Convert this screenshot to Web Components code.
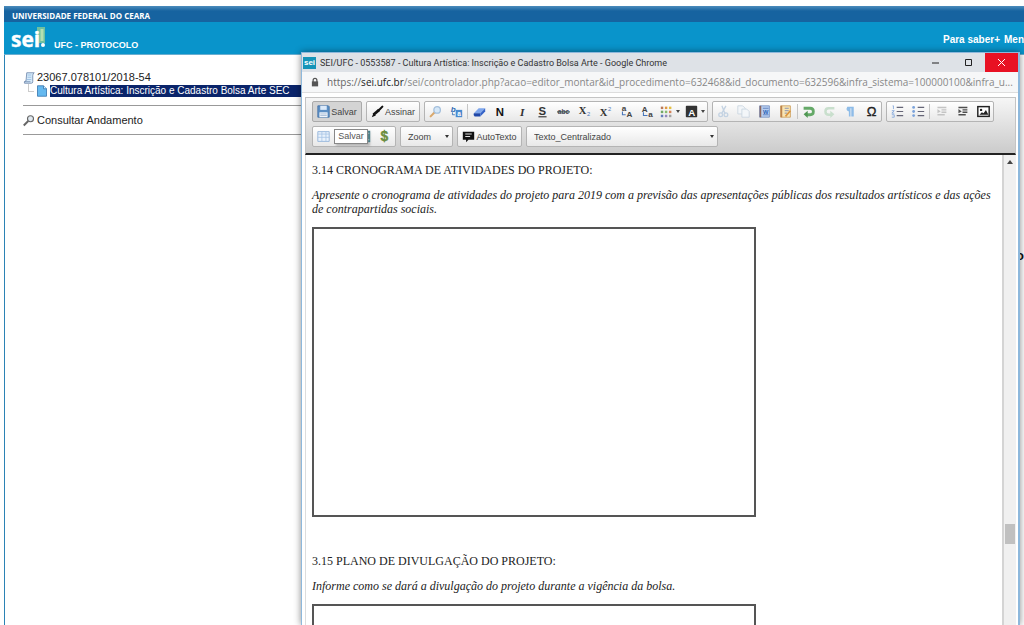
<!DOCTYPE html>
<html lang="pt-BR">
<head>
<meta charset="utf-8">
<title>SEI - Protocolo</title>
<style>
html,body{margin:0;height:100%;overflow:hidden;background:#fff}
body{font-family:"Liberation Sans",Arial,sans-serif}
</style>
</head>
<body>
<sei-desktop></sei-desktop>
<script>
const define=(tag,html)=>{
  customElements.define(tag,class extends HTMLElement{
    constructor(){super();this.attachShadow({mode:'open'})}
    connectedCallback(){
      const t=document.createElement('template');
      t.innerHTML=html(this);
      this.shadowRoot.replaceChildren(t.content.cloneNode(true));
    }
  });
};

const txt=(s,x,y,size,extra='')=>`<text x="${x}" y="${y}" font-size="${size}" ${extra}>${s}</text>`;
const lines='<path d="M7 3h8M7 8h8M7 13h8" stroke="#667" stroke-width="1.4"/>';
const indent=(c)=>`<g stroke="${c}" stroke-width="1.7"><path d="M3 3h11M8 6h6M8 9h6M3 12h9"/></g><path d="M3 5l4 3-4 2z" fill="${c}"/>`;
const ICONS={
  save:'<path d="M1 1h13l1 1v13H1z" fill="#5c8fc4" stroke="#3f6fa5"/><path d="M4 1h8v5H4z" fill="#dceafa"/><path d="M3 9h10v6H3z" fill="#f4f8fd"/><path d="M4 11h8M4 13h8" stroke="#9ab4d0"/>',
  pen:'<path d="M1 15l2-5 3 3z" fill="#111"/><path d="M3 12L10 6" stroke="#111" stroke-width="3.4"/><path d="M9 7l5-5" stroke="#111" stroke-width="2.6" stroke-linecap="round"/>',
  find:'<path d="M2 14l5-5" stroke="#d9a86c" stroke-width="2.6" stroke-linecap="round"/><circle cx="10" cy="6" r="4" fill="#d6e8f8" stroke="#a3bfdc" stroke-width="1.6"/>',
  replace:txt('b',1,8,10,'fill="#2f6db5" font-style="italic" font-weight="bold"')+'<path d="M3 9v3h3" stroke="#2f6db5" fill="none"/><rect x="7" y="6" width="8" height="9" fill="#4a8bd0"/>'+txt('a',9,13,8,'fill="#fff" font-weight="bold"'),
  eraser:'<path d="M1 10l6-6h8l-6 6z" fill="#7ea6ec"/><path d="M1 10h8v4H2q-2-1-1-4z" fill="#1f47a8"/><path d="M9 10l6-6v4l-6 6z" fill="#3463c8"/>',
  bold:txt('N',2,13,14,'font-weight="bold" fill="#111"'),
  italic:txt('I',6,13,14,'font-weight="bold" font-style="italic" font-family="Liberation Serif" fill="#333"'),
  under:txt('S',3,12,14,'font-weight="bold" fill="#333"')+'<path d="M3 14.5h10" stroke="#333" stroke-width="1.4"/>',
  strike:txt('abc',1,11,8,'font-weight="bold" fill="#445"')+'<path d="M0 8.5h16" stroke="#354b49" stroke-width="1.3"/>',
  sub:txt('X',1,11,13,'font-weight="bold" font-family="Liberation Serif" fill="#333"')+txt('2',11,14,7,'fill="#4775b9"'),
  sup:txt('X',1,14,13,'font-weight="bold" font-family="Liberation Serif" fill="#333"')+txt('2',11,7,7,'fill="#4775b9"'),
  upper:txt('a',2,7,10,'font-weight="bold" fill="#444"')+txt('A',8,15,10,'font-weight="bold" fill="#444"')+'<path d="M3 8v4h4" stroke="#4775b9" fill="none" stroke-width="1.3"/>',
  lower:txt('A',1,8,10,'font-weight="bold" fill="#444"')+txt('a',9,15,10,'font-weight="bold" fill="#444"')+'<path d="M3 9v4h5" stroke="#4775b9" fill="none" stroke-width="1.3"/>',
  colors:'<path d="M1 2h3v3H1z" fill="#bb7a58"/><path d="M6 2h3v3H6z" fill="#e09a40"/><path d="M11 2h3v3h-3z" fill="#e4bf42"/><path d="M1 7h3v3H1z" fill="#72a766"/><path d="M6 7h3v3H6z" fill="#8abc70"/><path d="M11 7h3v3h-3z" fill="#d58358"/><path d="M1 12h3v3H1z" fill="#657fba"/><path d="M6 12h3v3H6z" fill="#9588bb"/><path d="M11 12h3v3h-3z" fill="#a2a2a2"/>',
  back:'<rect x="1" y="1" width="14" height="14" rx="1" fill="#333"/>'+txt('A',4,13,12,'font-weight="bold" fill="#fff"'),
  cut:'<g fill="none" stroke="#c3d2e2" stroke-width="1.6"><path d="M6 1l4 10M11 1L6 10"/><circle cx="4.500" cy="12" r="2.300"/><circle cx="11" cy="12" r="2.300"/></g>',
  copy:'<g fill="#f3f6f9" stroke="#c8d4df"><path d="M1 1h6l3 3v7H1z"/><path d="M6 5h6l3 3v7H6z"/></g>',
  word:'<path d="M2 1h12v14H2z" fill="#b8cff0" stroke="#748fc0"/><path d="M2 1h2v14H2z" fill="#8d665e"/><path d="M6 4h7M6 12h7" stroke="#5579ba"/>'+txt('W',6,11,7,'font-weight="bold" fill="#2b5fb5"'),
  note:'<path d="M2 1h12v14H2z" fill="#fae5b1" stroke="#c99b58"/><path d="M2 1h2v14H2z" fill="#bd824c"/><path d="M7 4h5M7 7h5M7 10h3" stroke="#7181b1"/><path d="M8 14l6-7" stroke="#db943e" stroke-width="2"/>',
  undo:'<path d="M2 4h8q4 0 4 4t-4 4H6" fill="none" stroke="#65a968" stroke-width="3.400"/><path d="M7 7v9l-5-4.500z" fill="#4f9752"/>',
  redo:'<path d="M14 4H7q-4 0-4 4t4 4h3" fill="none" stroke="#c9dfcd" stroke-width="3"/><path d="M9 7v9l5-4.500z" fill="#c9dfcd"/>',
  para:'<path d="M4 2h8v12H9V4H8v10H6V8Q3 7 3 5z" fill="#8ebce8"/>',
  omega:txt('Ω',2,14,16,'fill="#222" stroke="#222" stroke-width=".4"'),
  num:lines+'<path d="M2 1h1v4M1 7h3L1 10h3M1 12h3v3H1" fill="none" stroke="#7ba3db"/>',
  bullets:lines+'<g fill="#7ba3db"><circle cx="2" cy="3" r="1.700"/><circle cx="2" cy="8" r="1.700"/><circle cx="2" cy="13" r="1.700"/></g>',
  outdent:indent('#c4c4c4'),
  indent:indent('#4e4e4e'),
  image:'<rect x="1" y="2" width="14" height="12" fill="#fff" stroke="#222" stroke-width="1.800"/><circle cx="5" cy="6" r="1.500" fill="#222"/><path d="M3 12l3-3 2 1 3-4 3 6z" fill="#222"/>',
  table:'<path d="M1 2h14v12H1z" fill="#e9f2fc" stroke="#8aaed6"/><path d="M1 5h14M6 2v12M11 2v12M1 9h14" stroke="#a6c4e5"/>',
  book:'<path d="M8 1h7v14H8z" fill="#287d8c"/><path d="M10 4h4M10 12h4" stroke="#d4edf0"/>',
  money:txt('$',3,14,17,'font-weight="bold" fill="#719442" stroke="#52752b" stroke-width=".4"'),
  auto:'<path d="M1 2h14v10H8l-3 3v-3H1z" fill="#111"/><path d="M4 5h8M4 8h6" stroke="#ddd" stroke-width="1.300"/>',
  scroll:'<path d="M5 1h10q-2 1-2 4v8q0 2-2 2H2q-1-2 1-3h1z" fill="#d6eafa" stroke="#627ca3"/><path d="M6 4h5M6 7h5M5 10h6" stroke="#8fb5dd"/><path d="M2 13h8" stroke="#627ca3"/>',
  doc:'<path d="M2 1h8l4 4v10H2z" fill="#65b9ef" stroke="#2c6da8"/><path d="M10 1v4h4" fill="#d6efff" stroke="#2c6da8"/>',
  loupe:'<path d="M1 14l6-6" stroke="#666" stroke-width="2.500"/><circle cx="10" cy="5" r="4" fill="#e1e9f0" stroke="#666" stroke-width="1.500"/>',
  lock:'<rect x="3" y="7" width="10" height="8" fill="#555"/><path d="M5 8V5q0-3 3-3t3 3v3" fill="none" stroke="#555" stroke-width="2"/>'
};
define('ui-icon',e=>`<style>:host{display:block;flex:none;width:var(--size,13px);height:var(--size,13px)}svg{display:block;width:100%;height:100%;overflow:visible;font-family:"Liberation Sans",sans-serif}</style><svg viewBox="0 0 16 16" aria-hidden="true">${ICONS[e.getAttribute('name')]}</svg>`);

define('tool-button',e=>`<style>
:host{display:block;flex:none;width:20px;height:20px}
:host([menu]){width:24px}
button{all:unset;display:flex;align-items:center;justify-content:center;gap:3px;width:100%;height:100%}
.caret{border:2px solid transparent;border-top:3px solid #444;border-bottom:0}
</style><button aria-label="${e.getAttribute('icon')}"><ui-icon name="${e.getAttribute('icon')}"></ui-icon>${e.hasAttribute('menu')?'<i class="caret"></i>':''}</button>`);

define('tool-group',()=>`<style>
:host{display:flex;box-sizing:border-box;flex:none;justify-content:space-between;align-items:center;width:var(--w);height:21px;border:1px solid #b4b4b4;border-radius:2px;background:linear-gradient(#fff,#e8e8e8)}
</style><slot></slot>`);

define('text-button',e=>`<style>
:host{display:block;flex:none;width:var(--w)}
button{display:flex;align-items:center;justify-content:center;gap:1px;box-sizing:border-box;width:100%;height:21px;margin:0;padding:0;border:1px solid #b4b4b4;border-radius:2px;background:linear-gradient(#fff,#e8e8e8);font:9px "Liberation Sans",sans-serif;color:#444;white-space:nowrap}
:host([pressed]) button{background:#d4d4d4;border-color:#aaa}
</style><button><ui-icon name="${e.getAttribute('icon')}"></ui-icon><slot></slot></button>`);

define('tool-select',e=>`<style>
:host{display:grid;flex:none;width:var(--w);align-items:center}
select,.caret{grid-area:1/1}
select{appearance:none;box-sizing:border-box;width:100%;height:21px;margin:0;padding:0 7px;border:1px solid #b4b4b4;border-radius:2px;background:linear-gradient(#fff,#e8e8e8);font:9px "Liberation Sans",sans-serif;color:#444}
.caret{justify-self:end;margin-right:4px;border:2px solid transparent;border-top:3px solid #333;border-bottom:0;pointer-events:none}
</style><select aria-label="${e.getAttribute('label')}"><option>${e.getAttribute('value')}</option></select><i class="caret"></i>`);

define('tool-sep',()=>`<style>:host{display:block;width:1px;height:15px;background:#c6c6c6}</style>`);

const tools=(s)=>s.split(' ').map(n=>n==='|'?'<tool-sep></tool-sep>':`<tool-button icon="${n.replace('+','')}"${n.endsWith('+')?' menu':''}></tool-button>`).join('');

define('editor-toolbar',()=>`<style>
:host{display:block;box-sizing:border-box;height:58px;padding:3px 6px 0;border:1px solid #c4c4c4;border-bottom:2px solid #222;background:linear-gradient(#f6f6f6,#cbcbcb);overflow:hidden}
.row{display:flex;gap:4px;margin-bottom:4px}
.tables{position:relative}
.tip{position:absolute;left:21px;top:2px;box-sizing:border-box;width:34px;height:15px;border:1px solid #888;background:#fff;box-shadow:2px 2px 2px #8888;font:9px/13px "Liberation Sans",sans-serif;text-align:center;color:#555}
</style>
<div class="row">
<text-button icon="save" pressed style="--w:50px">Salvar</text-button>
<text-button icon="pen" style="--w:54px">Assinar</text-button>
<tool-group style="--w:284px">${tools('find replace | eraser bold italic under strike sub sup upper lower colors+ back+')}</tool-group>
<tool-group style="--w:170px">${tools('cut copy word note | undo redo para omega')}</tool-group>
<tool-group style="--w:108px">${tools('num bullets | outdent indent image')}</tool-group>
</div>
<div class="row">
<tool-group class="tables" style="--w:84px">${tools('table table book money')}<span class="tip" role="tooltip">Salvar</span></tool-group>
<tool-select label="Zoom" value="Zoom" style="--w:53px"></tool-select>
<text-button icon="auto" style="--w:65px">AutoTexto</text-button>
<tool-select label="Estilo" value="Texto_Centralizado" style="--w:192px"></tool-select>
</div>`);

define('editor-document',()=>`<style>
:host{display:flex;flex:1;min-height:0;overflow:hidden}
article{flex:1;min-width:0;padding:8px 6px 0;font:12px/14px "Liberation Serif","Times New Roman",serif;color:#222}
h2{margin:0 0 11px;font:inherit}
p{margin:0 0 11px}
.box{box-sizing:border-box;width:444px;height:290px;margin-bottom:37px;border:2px solid #555}
.bar{flex:none;display:flex;flex-direction:column;align-items:center;width:12px;border-left:2px solid #d4d4d4;background:#f0f0f0}
.up{margin-top:5px;border:3px solid transparent;border-bottom:4px solid #444;border-top:0}
.thumb{width:10px;height:20px;margin-top:360px;background:#c0c0c0}
</style>
<article>
<h2>3.14 CRONOGRAMA DE ATIVIDADES DO PROJETO:</h2>
<p><em>Apresente o cronograma de atividades do projeto para 2019 com a previsão das apresentações públicas dos resultados artísticos e das ações de contrapartidas sociais.</em></p>
<div class="box"></div>
<h2>3.15 PLANO DE DIVULGAÇÃO DO PROJETO:</h2>
<p><em>Informe como se dará a divulgação do projeto durante a vigência da bolsa.</em></p>
<div class="box"></div>
</article>
<div class="bar"><i class="up"></i><i class="thumb"></i></div>`);

define('browser-window',()=>`<style>
:host{display:flex;flex-direction:column;box-sizing:border-box;border:1px solid #8db8dc;border-width:1px 2px 0 1px;background:#fff;box-shadow:0 0 7px #0007;font-family:"Open Sans","Noto Sans",sans-serif;overflow:visible}
header{display:flex;align-items:center;height:19px;background:#dee2e7;font-size:9px;color:#333;white-space:nowrap}
.fav{width:13px;height:12px;margin:0 4px 0 1px;background:#1594b8;color:#fff;font:bold 8px/12px "Liberation Sans",sans-serif;text-align:center}
.title{flex:1;font-family:Roboto,sans-serif}
.ctl{all:unset;display:flex;align-items:center;justify-content:center;width:33px;height:19px}
.ctl svg{width:9px;height:9px;fill:none;stroke:#222}
.close{background:#e81123}.close svg{stroke:#fff}
.url{display:flex;align-items:center;gap:7px;height:20px;padding-left:8px;border-bottom:1px solid #ddd;background:#f6f7f8;font-size:10px;color:#888;white-space:nowrap;--size:10px}
.url b{font-weight:400;color:#222}.url span span{color:#666}
.body{display:flex;flex-direction:column;flex:1;min-height:0;margin:4px 2px 0 3px}
editor-document{border-left:1px solid #ddd}
</style>
<header><span class="fav">sei</span><span class="title">SEI/UFC - 0553587 - Cultura Artística: Inscrição e Cadastro Bolsa Arte - Google Chrome</span>
<button class="ctl" aria-label="Minimizar"><svg viewBox="0 0 9 9"><path d="M1 5h7"/></svg></button>
<button class="ctl" aria-label="Maximizar"><svg viewBox="0 0 9 9"><path d="M1.500 1.500h6v6h-6z"/></svg></button>
<button class="ctl close" aria-label="Fechar"><svg viewBox="0 0 9 9"><path d="M1 1l7 7M8 1L1 8"/></svg></button></header>
<div class="url"><ui-icon name="lock"></ui-icon><span><span>https://</span><b>sei.ufc.br</b>/sei/controlador.php?acao=editor_montar&amp;id_procedimento=632468&amp;id_documento=632596&amp;infra_sistema=100000100&amp;infra_u...</span></div>
<div class="body"><editor-toolbar></editor-toolbar><editor-document></editor-document></div>`);

define('sei-header',()=>`<style>
:host{display:block;color:#fff;font-weight:bold;white-space:nowrap}
.org{height:16px;padding-left:8px;background:linear-gradient(#4c8cbc,#1663a0 5px);font:bold 8px/20px "Open Sans","Liberation Sans",sans-serif}
.bar{display:flex;align-items:center;height:32px;padding-left:8px;background:#0994cb;border-bottom:1px solid #69aed0}
.logo{width:35px;height:26px;margin-right:7px;overflow:visible}
.unit{flex:1;font-size:9px;padding-top:14px}
nav{display:flex;gap:4px;width:81px;font-size:10px;padding-top:2px}
a{color:#fff;text-decoration:none}
</style><div class="org">UNIVERSIDADE FEDERAL DO CEARA</div>
<div class="bar"><svg class="logo" viewBox="0 0 35 26" role="img" aria-label="sei!"><path d="M25 2h8v16h-8z" fill="#6fc0a0"/><text x="-1" y="22" font-family="Open Sans" font-size="21" font-weight="bold" fill="#fff" stroke="#fff" stroke-width=".4">sei</text><path d="M30 4v12" stroke="#b5e0b0" stroke-width="3"/><circle cx="31" cy="20" r="2" fill="#fff"/></svg>
<span class="unit">UFC - PROTOCOLO</span><nav><a href="#">Para saber+</a><a href="#">Menu</a></nav></div>`);

define('process-tree',()=>`<style>
:host{display:block;padding:16px 0 0 18px;font-size:11px;color:#222}
.line{display:flex;align-items:center;gap:2px;height:13px;line-height:13px;white-space:nowrap;--size:12px}
a{color:inherit;text-decoration:none}
.child{margin-left:5px;height:14px}
.elbow{flex:none;width:5px;height:7px;border:1px solid #ccc;border-width:0 0 1px 1px;margin-bottom:6px}
.sel{flex:1;height:12px;line-height:12px;font-size:10px;background:#0a246a;color:#fff}
hr{margin:7px 0 8px;border:0;border-top:1px solid #999}
</style>
<div class="line"><ui-icon name="scroll"></ui-icon><a href="#">23067.078101/2018-54</a></div>
<div class="line child"><i class="elbow"></i><ui-icon name="doc"></ui-icon><a class="sel" href="#">Cultura Artística: Inscrição e Cadastro Bolsa Arte SEC</a></div>
<hr><div class="line"><ui-icon name="loupe"></ui-icon><a href="#">Consultar Andamento</a></div><hr>`);

define('sei-desktop',()=>`<style>
:host{display:block;position:relative;height:100vh;padding:6px 0 0 4px;box-sizing:border-box;overflow:hidden}
.page{display:flex;flex-direction:column;height:100%}
main{display:grid;grid-template-columns:320px 1fr;flex:1;border-left:1px solid #2b83b5}
.child-pane{display:flex;justify-content:flex-end;padding-top:193px;font-size:13px;line-height:15px;font-weight:bold;color:#111}
browser-window{position:absolute;left:301px;right:4px;top:52px;bottom:0}
</style><div class="page"><sei-header></sei-header><main><process-tree></process-tree><div class="child-pane">o</div></main></div>
<browser-window></browser-window>`);
</script>
</body>
</html>
